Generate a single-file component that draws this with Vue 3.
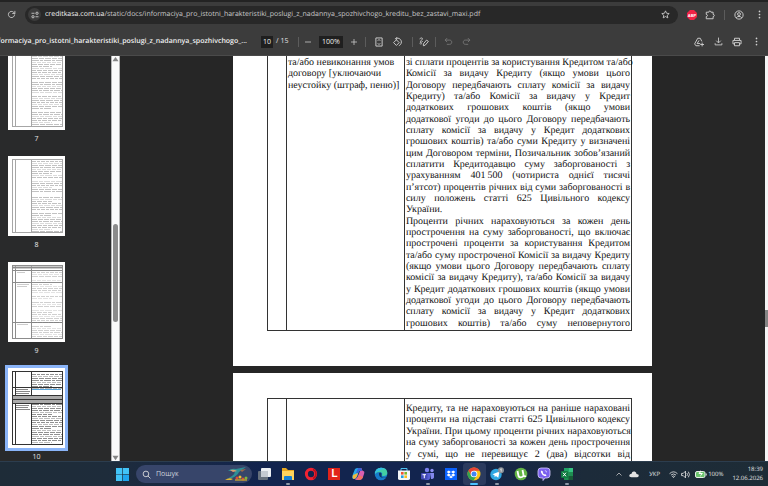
<script setup>
import { ref } from 'vue'

const pageNumber = ref('10')
const zoomLevel = ref('100%')
const query = ref('')

const firstLeft = ['та/або невиконання умов', 'договору [уключаючи', 'неустойку (штраф, пеню)]']
const firstRight = [
  'зі сплати процентів за користування Кредитом та/або',
  'Комісії за видачу Кредиту (якщо умови цього',
  'Договору передбачають сплату комісії за видачу',
  'Кредиту) та/або Комісії за видачу у Кредит',
  'додаткових грошових коштів (якщо умови',
  'додаткової угоди до цього Договору передбачають',
  'сплату комісії за видачу у Кредит додаткових',
  'грошових коштів) та/або суми Кредиту у визначені',
  'цим Договором терміни, Позичальник зобов’язаний',
  'сплатити Кредитодавцю суму заборгованості з',
  'урахуванням 401\u202f500 (чотириста однієї тисячі',
  'п’ятсот) процентів річних від суми заборгованості в',
  'силу положень статті 625 Цивільного кодексу',
  'України.',
  'Проценти річних нараховуються за кожен день',
  'прострочення на суму заборгованості, що включає',
  'прострочені проценти за користування Кредитом',
  'та/або суму простроченої Комісії за видачу Кредиту',
  '(якщо умови цього Договору передбачають сплату',
  'комісії за видачу Кредиту), та/або Комісії за видачу',
  'у Кредит додаткових грошових коштів (якщо умови',
  'додаткової угоди до цього Договору передбачають',
  'сплату комісії за видачу у Кредит додаткових',
  'грошових коштів) та/або суму неповернутого'
]
const secondRight = [
  'Кредиту, та не нараховуються на раніше нараховані',
  'проценти на підставі статті 625 Цивільного кодексу',
  'України. При цьому проценти річних нараховуються',
  'на суму заборгованості за кожен день прострочення',
  'у сумі, що не перевищує 2 (два) відсотки від'
]

// Miniature text rows: [y, length, darkness]
function rows(from, to, step, tone, blanks = []) {
  const out = []
  let i = 0
  for (let y = from; y < to; y += step) {
    if (!blanks.includes(i)) {
      out.push({ y, x2: i % 7 === 6 ? 44 : 54, tone: i % 3 === 1 ? tone * 0.6 : tone, dash: `${4 + (i % 4)} 1 ${3 + (i % 3)} 1` })
    }
    i++
  }
  return out
}
const thumbs = [
  { n: 7, rows: rows(4, 75, 2, 0.36, [13, 20, 28]), rules: [], frame: '#a6a6a6' },
  { n: 8, rows: rows(5, 76, 2, 0.36, [9, 16, 17, 25]), rules: [], frame: '#a6a6a6' },
  { n: 9, rows: rows(10, 75, 2, 0.28, [3, 5, 11, 14, 18, 26]), rules: [5, 8, 20, 60], frame: '#8c8c8c' },
  { n: 10, rows: rows(6, 76, 2, 0.65, [8, 9, 10, 11, 12]), rules: [19, 27, 31, 35], frame: '#333', active: true }
]
</script>

<template>
  <div class="screen">
    <header class="browser">
      <button class="ib reload" aria-label="Reload">
        <svg viewBox="0 0 16 16" width="9" height="9"><path d="M13.5 8a5.5 5.5 0 1 1-1.6-3.9L14 6.2M14 1.5v4.8H9.3" /></svg>
      </button>
      <div class="address">
        <button class="site" aria-label="Site information">
          <svg viewBox="0 0 16 16" width="8" height="8"><path d="M1 4.5h6M9 11.5h6" /><circle cx="12" cy="4.5" r="2.3" /><circle cx="4" cy="11.5" r="2.3" /></svg>
        </button>
        <a class="url" href="#"><b>creditkasa.com.ua</b>/static/docs/informaciya_pro_istotni_harakteristiki_poslugi_z_nadannya_spozhivchogo_kreditu_bez_zastavi_maxi.pdf</a>
        <button class="ib" aria-label="Bookmark">
          <svg viewBox="0 0 16 16" width="9" height="9"><path d="M8 1.5l1.9 4.3 4.7.5-3.5 3.1 1 4.6L8 11.6 3.9 14l1-4.6L1.4 6.3l4.7-.5z" /></svg>
        </button>
      </div>
      <button class="ib abp" aria-label="Adblock Plus">
        <svg viewBox="0 0 20 20" width="10" height="10"><path class="red" d="M6 0h8l6 6v8l-6 6H6l-6-6V6z" /><text x="10" y="13" text-anchor="middle">ABP</text></svg>
      </button>
      <button class="ib" aria-label="Extensions">
        <svg viewBox="0 0 16 16" width="10" height="10"><path d="M2 3.5h4C6 1 9.500 1 9.500 3.500H13V7c2.500 0 2.500 3.500 0 3.500V14H2v-3.500c2.500 0 2.500-3.500 0-3.500z" /></svg>
      </button>
      <i class="sep"></i>
      <button class="ib profile" aria-label="Profile">
        <svg viewBox="0 0 16 16" width="10" height="10"><circle cx="8" cy="8" r="6.600" /><circle cx="8" cy="6.500" r="2.300" /><path d="M3.500 12.500c2-3 7-3 9 0" /></svg>
      </button>
      <button class="ib" aria-label="Menu">
        <svg viewBox="0 0 16 16" width="9" height="9" class="solid"><circle cx="8" cy="2.500" r="1.500" /><circle cx="8" cy="8" r="1.500" /><circle cx="8" cy="13.500" r="1.500" /></svg>
      </button>
    </header>

    <div class="tools">
      <div class="title"><span>informaciya_pro_istotni_harakteristiki_poslugi_z_nadannya_spozhivchogo_...</span></div>
      <div class="pager"><input v-model="pageNumber" class="field page-no" aria-label="Page"><span>/ 15</span></div>
      <i class="sep"></i>
      <div class="zoomer">
        <button class="ib" aria-label="Zoom out"><svg viewBox="0 0 16 16" width="8" height="8"><path d="M2 8h12" /></svg></button>
        <input v-model="zoomLevel" class="field zoom-level" aria-label="Zoom">
        <button class="ib" aria-label="Zoom in"><svg viewBox="0 0 16 16" width="8" height="8"><path d="M2 8h12M8 2v12" /></svg></button>
      </div>
      <i class="sep"></i>
      <div class="pair">
        <button class="ib" aria-label="Fit to page"><svg viewBox="0 0 16 16" width="10" height="10"><path d="M3 1.500h10v13H3zM6 6l2-2 2 2M6 10l2 2 2-2" /></svg></button>
        <button class="ib" aria-label="Rotate"><svg viewBox="0 0 16 16" width="10" height="10"><path d="M7 4.500l4.500 4.500L7 13.500 2.500 9zM6 2.500c5-2 9 1.500 9 5.500 0 3-2 5-4 6M8.500.5l-3 2 2.500 2.500" /></svg></button>
      </div>
      <i class="sep"></i>
      <button class="ib pen" aria-label="Draw"><svg viewBox="0 0 16 16" width="10" height="10"><path d="M1 3c4-3 6-1 3 2s-2 5 2 2M7 11l5-6 3 2-5 6-3 1zM1 10c3-2 3 1 2 2" /></svg></button>
      <i class="sep"></i>
      <div class="pair dim">
        <button class="ib" aria-label="Undo"><svg viewBox="0 0 16 16" width="9" height="9"><path d="M5.500 2L2 5.500 5.500 9M2 5.500h8c5 0 5 7.500 0 7.500H5" /></svg></button>
        <button class="ib" aria-label="Redo"><svg viewBox="0 0 16 16" width="9" height="9"><path d="M10.500 2L14 5.500 10.500 9M14 5.500H6c-5 0-5 7.500 0 7.500h5" /></svg></button>
      </div>
      <div class="actions">
        <button class="ib" aria-label="Save to Drive"><svg viewBox="0 0 16 16" width="10" height="10"><path d="M6 2h4l2.500 5M6 2L1 11l2 3h6M8 5.500L5 10.500h5M13 9v6M10 12h6" /></svg></button>
        <button class="ib" aria-label="Download"><svg viewBox="0 0 16 16" width="9" height="9"><path d="M8 1v9M4 6.500L8 10.500l4-4M2 11v3h12v-3" /></svg></button>
        <button class="ib" aria-label="Print"><svg viewBox="0 0 16 16" width="10" height="10"><path d="M4 5V2h8v3M4 11H1.500V5.500h13V11H12M4 9h8v5H4z" /></svg></button>
        <button class="ib" aria-label="More"><svg viewBox="0 0 16 16" width="9" height="9" class="solid"><circle cx="8" cy="2.500" r="1.500" /><circle cx="8" cy="8" r="1.500" /><circle cx="8" cy="13.500" r="1.500" /></svg></button>
      </div>
    </div>

    <main class="viewer">
      <nav class="sidebar" aria-label="Pages">
        <div class="thumbs">
          <a v-for="t in thumbs" :key="t.n" href="#" class="thumb">
            <svg :class="{ active: t.active }" viewBox="0 0 57 80" width="57" height="80">
              <rect width="57" height="80" fill="#fff" stroke="none" />
              <g fill="none" :stroke="t.frame">
                <rect x="4.500" y="3.500" width="50" height="73" />
                <path d="M7.500 3.500v73M23.500 3.500v73" />
                <path v-for="r in t.rules" :key="r" :d="`M4.500 ${r}.5h50`" />
              </g>
              <path v-for="r in t.rows" :key="r.y" :d="`M24 ${r.y + 0.5}H${r.x2}`" stroke="#555" :stroke-opacity="r.tone" :stroke-dasharray="r.dash" />
              <g v-if="t.n === 9" stroke="#aaa"><path d="M5 4.500h49M5 6.500h49" opacity=".6" /><path d="M9 10.500h8M9 22.500h12M9 24.500h10M9 62.500h11" opacity=".6" /></g>
              <g v-if="t.n === 10">
                <path d="M24 21.500h29" stroke="#58a6dc" />
                <path d="M5 33.500h49M5 29.500h49" stroke="#aaa" stroke-width="3" />
                <path d="M8 21.500h12M8 23.500h14M8 25.500h13M8 37.500h13M8 39.500h12M8 41.500h14" stroke="#888" />
              </g>
            </svg>
            <span>{{ t.n }}</span>
          </a>
        </div>
        <div class="scroll">
          <svg viewBox="0 0 8 8" width="7" height="7"><path d="M4 1l3.500 5h-7z" /></svg>
          <div class="track"><i></i></div>
          <svg viewBox="0 0 8 8" width="7" height="7"><path d="M4 7L.5 2h7z" /></svg>
        </div>
      </nav>
      <section class="pages">
        <article class="sheet first">
          <table>
            <tbody>
              <tr>
                <td class="c1"></td>
                <td class="c2"><div class="lines left"><p v-for="l in firstLeft" :key="l">{{ l }}</p></div></td>
                <td class="c3"><div class="lines full"><p v-for="(l, i) in firstRight" :key="i" :class="{ last: l === 'України.' }">{{ l }}</p></div></td>
              </tr>
            </tbody>
          </table>
        </article>
        <article class="sheet second">
          <table>
            <tbody>
              <tr>
                <td class="c1"></td>
                <td class="c2"></td>
                <td class="c3"><div class="lines part"><p v-for="l in secondRight" :key="l">{{ l }}</p></div></td>
              </tr>
            </tbody>
          </table>
        </article>
      </section>
      <div class="edge"><i></i></div>
    </main>

    <footer class="taskbar">
      <button class="tb start" aria-label="Start">
        <svg viewBox="0 0 12 12" width="13" height="13"><path fill="#42c3f7" d="M0 0h5.700v5.700H0zM6.300 0H12v5.700H6.300zM0 6.300h5.700V12H0z" /><path fill="#1fa5ee" d="M6.300 6.300H12V12H6.300z" /></svg>
      </button>
      <label class="search">
        <svg viewBox="0 0 16 16" width="9" height="9"><circle cx="7" cy="7" r="5" /><path d="M10.500 10.500L15 15" /></svg>
        <input v-model="query" placeholder="Пошук" aria-label="Пошук">
        <svg class="art" viewBox="0 0 24 14" width="24" height="14">
          <path d="M4 4Q7 1 12 2L22 0 15 5Q13 9 8 11L3 12 8 9Q11 7 11 4Z" fill="#2d8f96" /><path d="M6 3Q10 2 13 4L9 5Z" fill="#d8a071" /><path d="M16 3l6-1-4 3z" fill="#9a6a4a" />
          <path d="M1 13q4-3 8-1l-2 1z" fill="#e2b734" /><circle cx="13" cy="11" r="1.500" fill="#e04c35" /><circle cx="16" cy="10" r="1.500" fill="#f0bd31" /><circle cx="19" cy="12" r="1.500" fill="#e04c35" /><circle cx="22" cy="11" r="1.500" fill="#7fb53c" /><path d="M11 13h12" stroke="#b99b35" />
        </svg>
      </label>
      <div class="apps">
        <button class="tb" aria-label="Task view"><svg viewBox="0 0 14 14" width="14" height="14"><rect y="4" width="10" height="9" rx="1" fill="#66707c" /><rect x="3" y="1" width="10" height="9" rx="1" fill="#eceff2" /><path d="M3 4h7v6H3z" fill="#c4cad1" /></svg></button>
        <button class="tb run" aria-label="Files"><svg viewBox="0 0 14 14" width="14" height="14"><path d="M1 1h4l2 2h6v10H1z" fill="#e9a91f" /><path d="M1 4h12v9H1z" fill="#ffd35c" /><path d="M3 10q0-1 1-1h6q1 0 1 1v3H3z" fill="#1681d2" /></svg></button>
        <button class="tb" aria-label="Opera"><svg viewBox="0 0 14 14" width="14" height="14"><ellipse cx="7" cy="7" rx="4.600" ry="4.800" fill="none" stroke="#f02232" stroke-width="3" /><path d="M9 2.500q3 1 3 4.500t-3 4.500" fill="none" stroke="#b80f1e" stroke-width="1.500" /></svg></button>
        <button class="tb" aria-label="L"><span class="letter">L</span></button>
        <button class="tb" aria-label="Copilot"><svg viewBox="0 0 14 14" width="14" height="14"><path d="M4 2q1-1 3-1h2L6 10q-1 2-3 2Q0 12 2 7z" fill="#27a8e8" /><path d="M2 8q-1 4 1 4 2 0 3-3l1-3z" fill="#f2b83b" /><path d="M8 1h2q1 0 1 2l1 1q2 0 1 3l-1 3q-1 3-4 3H6q-2 0-2-1 2 0 3-3l2-5z" fill="#d65fb1" /><path d="M7 1h3q1 1 1 3H9q-1 0-2 2L5 6z" fill="#3863d8" /><path d="M5 12q2-1 3-4l4 2q-1 3-4 3z" fill="#f17062" /></svg></button>
        <button class="tb" aria-label="Edge"><svg viewBox="0 0 14 14" width="14" height="14"><circle cx="7" cy="7" r="6.300" fill="#167ac9" /><path d="M1 7Q1 1 7 .7q6.300 0 6.300 5.300 0 3-4 3-2 0-1-2 0-2-3-2-3 0-4.300 2z" fill="#43cfa3" /><path d="M1 6Q2 1 7 .7q3 0 5 2-4-1-6 1-3 0-5 3z" fill="#35bfe5" /><path d="M5 6q-1 5 6 5 1 0 1-.5-5 1-4.500-2.500Q8 6 6.500 5.500z" fill="#12345f" /></svg></button>
        <button class="tb" aria-label="Store"><svg viewBox="0 0 14 14" width="14" height="14"><path d="M4 4V1.500h6V4" fill="none" stroke="#4fc2f3" /><path d="M1 3.500h12v8q0 1.500-2 1.500H3q-2 0-2-1.500z" fill="#f2f5f8" /><path d="M4 5h2.600v2.600H4z" fill="#ef5335" /><path d="M7.400 5H10v2.600H7.400z" fill="#7cb82f" /><path d="M4 8.400h2.600V11H4z" fill="#209fe5" /><path d="M7.400 8.400H10V11H7.400z" fill="#fbbd1c" /></svg></button>
        <button class="tb run" aria-label="Teams"><svg viewBox="0 0 14 14" width="14" height="14"><circle cx="6" cy="3" r="2.200" fill="#7a80ee" /><circle cx="11" cy="3.500" r="1.700" fill="#8b90f4" /><path d="M3 6h6v5q0 2-3 2t-3-2z" fill="#5961d6" /><path d="M9 6h4v4q0 2-3 2z" fill="#8288ee" /><rect y="6" width="6.500" height="6.500" rx="1" fill="#444bb8" /><path d="M1.500 7.700h3.500M3.300 7.700v3.500" stroke="#fff" /></svg></button>
        <button class="tb" aria-label="Dropbox"><svg viewBox="0 0 14 14" width="14" height="14"><path d="M1 1h12v12H1z" fill="#0a62ff" /><path d="M4.800 3.500L7 5 4.800 6.500 2.600 5zM9.200 3.500L11.400 5 9.200 6.500 7 5zM4.800 6.500L7 8 4.800 9.500 2.600 8zM9.200 6.500L11.400 8 9.200 9.500 7 8zM7 8.700l2 1.300-2 1.300L5 10z" fill="#fff" /></svg></button>
        <button class="tb run current" aria-label="Chrome"><svg viewBox="0 0 14 14" width="14" height="14"><circle cx="7" cy="7" r="6.500" fill="#fbc116" /><path d="M1.400 3.700A6.500 6.500 0 0 1 12.600 3.700H7L4.200 8.600z" fill="#e94335" /><path d="M1.400 3.700A6.500 6.500 0 0 0 6.500 13.500L9.800 8.600H4.200z" fill="#31a552" /><circle cx="7" cy="7" r="3.300" fill="#fff" /><circle cx="7" cy="7" r="2.500" fill="#4285f4" /></svg></button>
        <button class="tb run" aria-label="Telegram"><svg viewBox="0 0 14 14" width="14" height="14"><circle cx="6" cy="7.500" r="5.700" fill="#2fa7e2" /><path d="M2.500 7.300L9.500 4.500 8.300 10.700 5.900 9l-1.200 1.200-.2-2z" fill="#fff" /><circle cx="11" cy="3.200" r="3" fill="#8c9298" /><path d="M10.300 2.500l.9-.8v3" fill="none" stroke="#fff" stroke-width=".7" /></svg></button>
        <button class="tb" aria-label="uTorrent"><svg viewBox="0 0 14 14" width="14" height="14"><circle cx="7" cy="7" r="6.300" fill="#63b445" /><path d="M3.500 4l1 5q1 2 3.500 1l1.500-1M8.500 3l1 5q.5 2 2.500 1" fill="none" stroke="#fff" stroke-width="1.800" /></svg></button>
        <button class="tb" aria-label="Viber"><svg viewBox="0 0 14 14" width="14" height="14"><path d="M4 1h6q3 0 3 3v4q0 3-3 3H8l-2 2.500V11H4Q1 11 1 8V4q0-3 3-3z" fill="#7b61ef" stroke="#d5cbff" stroke-width=".8" /><path d="M4.500 3.500q-1 .5-.5 2 1 2.500 3.500 3.500 1.500.3 2-.8L8 7l-.8.600Q6 6.800 5.700 5.600l.6-.7zM7.500 3q2.500.3 2.500 3" fill="#fff" stroke="none" /></svg></button>
        <button class="tb run" aria-label="Excel"><svg viewBox="0 0 14 14" width="14" height="14"><path d="M4 1h9v12H4z" fill="#1e8e51" /><path d="M8.500 1H13v4H8.500z" fill="#35c481" /><path d="M4 1h4.500v4H4z" fill="#21a366" /><path d="M8.500 9H13v4H8.500z" fill="#185c37" /><rect x="1" y="4" width="7" height="7" rx="1" fill="#107c41" /><path d="M3 5.700l3 3.600M6 5.700L3 9.300" stroke="#fff" /></svg></button>
      </div>
      <div class="tray">
        <button class="ib" aria-label="Hidden icons"><svg viewBox="0 0 16 16" width="8" height="8"><path d="M3 11l5-5 5 5" /></svg></button>
        <svg class="cloud" viewBox="0 0 16 12" width="10" height="8"><path d="M4 11q-4 0-3.500-3Q1 5.500 4 5.500 5 1 9 2q3 1 3 4 4 0 3.500 3-.5 2-3 2z" /></svg>
        <span class="lang">УКР</span>
        <svg viewBox="0 0 16 16" width="9" height="9"><path d="M1 6.500q7-6.500 14 0M3.500 9q4.500-4 9 0M6 11.500q2-2 4 0L8 13.500z" /></svg>
        <svg viewBox="0 0 16 16" width="9" height="9"><path d="M1 6h3l4-4v12l-4-4H1zM10.500 5.500q2 2.500 0 5M13 3q4 5 0 10" /></svg>
        <svg class="battery" viewBox="0 0 12 8" width="12" height="8"><rect x=".5" y="1.500" width="9.500" height="6" rx="1.500" fill="#6bc46d" stroke="#e6efe6" /><path d="M11.200 3.500v2" stroke="#e6efe6" /><path d="M5.500 0L3.500 4H6l-1 3 3-4H5.500z" fill="#fff" stroke="none" /></svg>
        <span class="charge">100%</span>
        <div class="clock"><span>18:39</span><span>12.06.2026</span></div>
      </div>
    </footer>
  </div>
</template>

<style>
body {
  margin: 0;
  background: #282828;
}
</style>

<style scoped>
.screen {
  display: flex;
  flex-direction: column;
  height: 100vh;
  overflow: hidden;
  color: #e3e3e3;
  font: 7px/12px "Open Sans", "Noto Sans", sans-serif;
  text-rendering: geometricPrecision;
}
button,
input {
  margin: 0;
  padding: 0;
  border: 0;
  background: none;
  color: inherit;
  font: inherit;
}
a {
  color: inherit;
  text-decoration: none;
}
svg {
  display: block;
  flex: none;
  fill: none;
  stroke: currentColor;
  stroke-width: 1.5;
}
.solid {
  fill: currentColor;
  stroke: none;
}
.ib {
  display: grid;
  place-items: center;
  flex: none;
  width: 18px;
  height: 18px;
  color: #d0d0d0;
}
.sep {
  width: 1px;
  height: 10px;
  background: #5c5c5c;
}
.browser {
  display: flex;
  align-items: center;
  flex: none;
  height: 25px;
  padding: 0 0 1px 2px;
  border-top: 2px solid #232323;
  background: #3c3c3c;
}
.address {
  display: flex;
  align-items: center;
  flex: 1;
  min-width: 0;
  height: 18px;
  margin: 0 5px;
  padding: 0 4px 0 3px;
  border-radius: 9px;
  background: #282828;
}
.site {
  display: grid;
  place-items: center;
  width: 13px;
  height: 13px;
  border-radius: 50%;
  background: #3c3c3c;
}
.url {
  flex: 1;
  margin-left: 4px;
  overflow: hidden;
  white-space: nowrap;
  color: #c8c8c8;
}
.url b {
  color: #f1f1f1;
  font-weight: 400;
}
.abp .red {
  fill: #ef2345;
  stroke: none;
}
.abp text {
  fill: #fff;
  stroke: none;
  font: bold 8px "Liberation Sans", sans-serif;
}
.browser .sep {
  margin: 0 5px;
}
.profile {
  margin-right: 2px;
}
.tools {
  display: flex;
  align-items: center;
  flex: none;
  height: 27px;
  border-bottom: 1px solid #4a4a4a;
  background: #3c3c3c;
}
.title {
  display: flex;
  justify-content: flex-end;
  width: 247px;
  overflow: hidden;
  white-space: nowrap;
  color: #f1f1f1;
  font-weight: 600;
}
.pager {
  display: flex;
  gap: 3px;
  width: 37px;
  margin-left: 14px;
  white-space: nowrap;
}
.field {
  height: 12px;
  background: #1f1f1f;
  color: #f1f1f1;
  text-align: center;
}
.page-no {
  width: 12px;
}
.zoomer {
  display: flex;
  align-items: center;
  gap: 2px;
  width: 66px;
}
.zoom-level {
  width: 24px;
}
.pair {
  display: flex;
  padding: 0 6px 0 4px;
}
.pen {
  width: 22px;
}
.dim {
  padding-left: 3px;
}
.dim .ib {
  color: #7d7d7d;
}
.actions {
  display: flex;
  gap: 1px;
  margin-left: auto;
  padding-right: 3px;
}
.viewer {
  display: flex;
  flex: 1;
  min-height: 0;
  background: #262626;
}
.sidebar {
  display: flex;
  width: 120px;
  background: #292a2b;
}
.thumbs {
  flex: 1;
  margin-top: -6px;
  padding-left: 8px;
  overflow: hidden;
  clip-path: inset(6px 0 0 0);
}
.thumb {
  display: flex;
  flex-direction: column;
  gap: 4px;
  width: 57px;
  height: 106px;
  text-align: center;
}
.thumb svg {
  stroke-width: 1;
}
.active {
  outline: 3px solid #8ab4f8;
}
.scroll {
  display: flex;
  flex-direction: column;
  align-items: center;
  width: 7px;
  border: solid #b4b4b4;
  border-width: 0 1px;
  background: #fafafa;
}
.scroll svg {
  fill: #858585;
  stroke: none;
}
.track {
  flex: 1;
  align-self: stretch;
  padding: 161px 1px 0;
}
.track i {
  display: block;
  height: 98px;
  border-radius: 3px;
  background: #8b8b8b;
}
.pages {
  display: flex;
  flex-direction: column;
  align-items: center;
  gap: 7px;
  flex: 1;
  overflow: hidden;
}
.sheet {
  box-sizing: border-box;
  flex: none;
  width: 65%;
  padding: 0 20px 35px 34px;
  background: #fff;
  color: #111;
  font: 10px/11px "Liberation Serif", serif;
}
.second {
  padding-top: 25px;
}
table {
  width: 100%;
  border-collapse: collapse;
  table-layout: fixed;
}
td {
  padding: 0 1px 1px;
  border: 1px solid #333;
  vertical-align: top;
}
.first td {
  border-top: 0;
}
.c1 {
  width: 16px;
}
.c2 {
  width: 115px;
}
.lines {
  display: grid;
  grid-template-columns: minmax(0, 1fr);
  grid-auto-rows: 1fr;
}
.left {
  height: 34px;
  margin-top: 1px;
}
.full {
  height: 272px;
  margin-top: 1px;
}
.part {
  height: 57px;
  margin-top: 4px;
}
.lines p {
  margin: 0;
  white-space: nowrap;
  text-align: justify;
  text-align-last: justify;
}
.left p,
.lines .last {
  text-align-last: left;
}
.edge {
  width: 3px;
  padding-top: 254px;
  box-sizing: border-box;
  background: #f4f4f4;
}
.edge i {
  display: block;
  height: 17px;
  background: #858585;
}
.taskbar {
  display: flex;
  align-items: center;
  flex: none;
  height: 24px;
  border-top: 1px solid #2c3d4e;
  background: linear-gradient(90deg, #1e2c38 0, #1e2c3b 14%, #12244e 34%, #12244e 58%, #1c2b3a 76%, #1e2c36 100%);
}
.tb {
  position: relative;
  display: grid;
  place-items: center;
  height: 22px;
}
.tb svg {
  stroke-width: 1;
  stroke: none;
}
.start {
  width: 27px;
  margin-left: 109px;
}
.search {
  display: flex;
  align-items: center;
  box-sizing: border-box;
  width: 116px;
  height: 18px;
  padding: 0 4px 0 6px;
  border-radius: 9px;
  background: #37456a;
}
.search input {
  flex: 1;
  min-width: 0;
  margin-left: 5px;
}
.search input::placeholder {
  color: #cdd2dc;
  opacity: 1;
}
.art {
  stroke: none;
}
.apps {
  display: grid;
  grid-template-columns: repeat(14, 1fr);
  width: 326px;
  margin-left: 1px;
}
.run::after {
  content: "";
  position: absolute;
  bottom: 0;
  left: 50%;
  width: 4px;
  height: 2px;
  margin-left: -2px;
  border-radius: 1px;
  background: #8f9aa8;
}
.current {
  border-radius: 3px;
  background: #2b3b5e;
}
.current::after {
  width: 8px;
  margin-left: -4px;
  background: #4cc2ff;
}
.letter {
  width: 12px;
  height: 12px;
  background: #e2231a;
  color: #fff;
  font: bold 10px/12px "Liberation Sans", sans-serif;
}
.tray {
  display: flex;
  align-items: center;
  gap: 3px;
  margin-left: auto;
  padding-right: 5px;
  font-size: 6px;
  white-space: nowrap;
}
.tray .ib {
  width: 14px;
}
.cloud {
  fill: #e3e3e3;
  stroke: none;
}
.lang {
  margin: 0 6px 0 7px;
}
.battery {
  margin-left: 2px;
  stroke-width: 1;
}
.charge {
  margin-left: -2px;
}
.clock {
  display: flex;
  flex-direction: column;
  align-items: flex-end;
  margin-left: 6px;
  line-height: 9px;
}
</style>
